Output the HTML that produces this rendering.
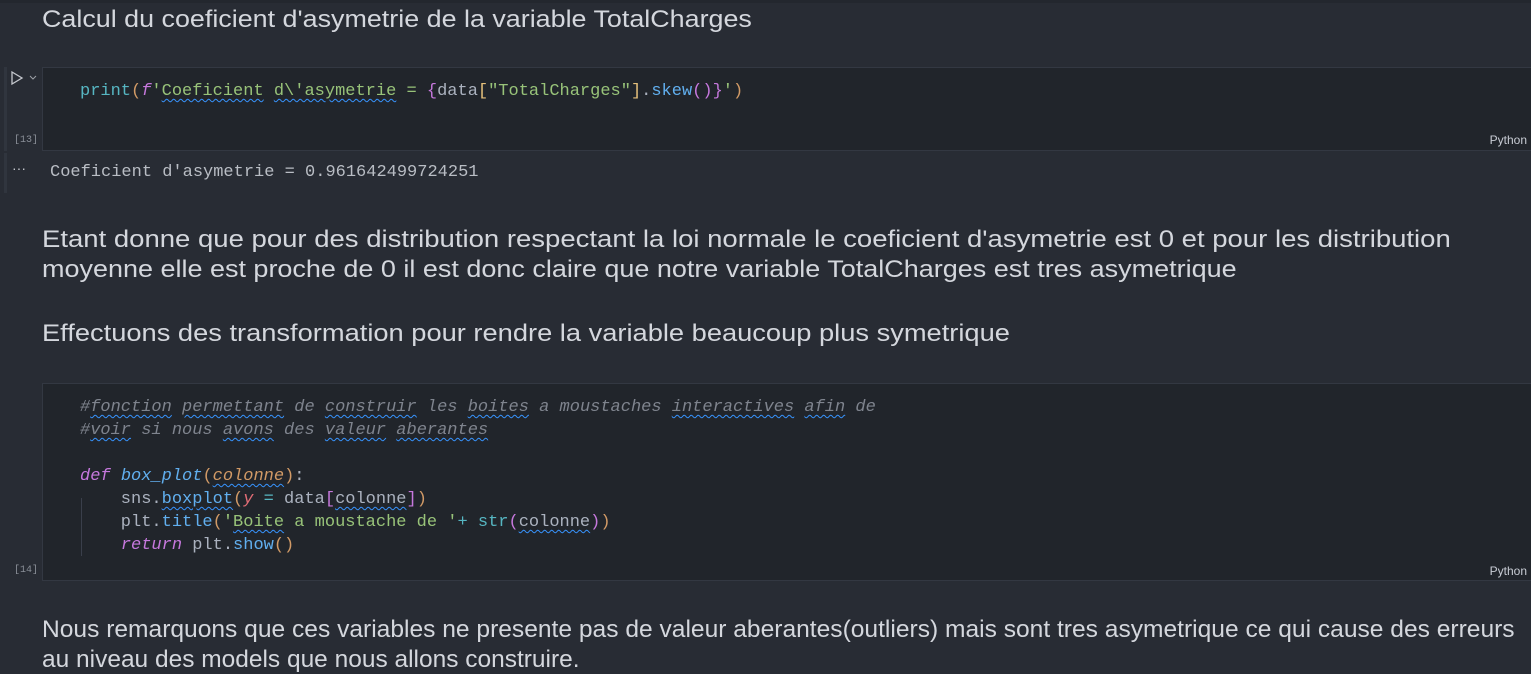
<!DOCTYPE html>
<html><head><meta charset="utf-8"><style>
body{margin:0;width:1531px;height:670px;background:#282c34;position:relative;overflow:hidden;font-family:"Liberation Sans",sans-serif;color:#d7dae0}
.md{position:absolute;left:42px;font-size:24px;white-space:nowrap;color:#d4d7dd;transform-origin:0 0}
.cell{position:absolute;left:42px;right:0;background:#21252b;border:1px solid #333842;border-right:none}
.code{position:absolute;left:80px;font-family:"Liberation Mono",monospace;font-size:17px;line-height:23px;white-space:pre;color:#abb2bf}
.num{position:absolute;left:14px;font-family:"Liberation Mono",monospace;font-size:10px;color:#8a8f98}
.py{position:absolute;right:4px;font-size:12px;color:#c8ccd4}
.bar{position:absolute;left:4px;width:3px;background:#30353e}
.f{color:#56b6c2}.s{color:#98c379}.k{color:#c678dd;font-style:italic}.o{color:#d19a66}.c{color:#7f848e;font-style:italic}.fn{color:#61afef;font-style:italic}.p{color:#e5c07b}.r{color:#e06c75;font-style:italic}.b{color:#61afef}
.w{text-decoration:underline wavy #3794ff;text-decoration-thickness:1px;text-underline-offset:3px}
</style></head><body>
<div style="position:absolute;left:0;top:0;width:1531px;height:3px;background:#23272e"></div>
<div class="md" style="top:6px;transform:scaleX(1.12)">Calcul du coeficient d'asymetrie de la variable TotalCharges</div>

<div class="bar" style="top:67px;height:84px"></div>
<svg style="position:absolute;left:10px;top:70px" width="28" height="16"><path d="M2 2 L12 8 L2 14 Z" fill="none" stroke="#c5c8ce" stroke-width="1.3"/><path d="M20 6 L23 9 L26 6" fill="none" stroke="#9ca0a6" stroke-width="1"/></svg>
<div class="cell" style="top:67px;height:82px"></div>
<div class="code" style="top:80px"><span class="f">print</span><span class="o">(</span><span class="k">f</span><span class="s">'<span class="w">Coeficient</span> <span class="w">d\'asymetrie</span> = </span><span class="k" style="font-style:normal">{</span>data<span class="p">[</span><span class="s">"TotalCharges"</span><span class="p">]</span>.<span class="b">skew</span><span class="k" style="font-style:normal">()</span><span class="k" style="font-style:normal">}</span><span class="s">'</span><span class="o">)</span></div>
<div class="num" style="top:135px">[13]</div>
<div class="py" style="top:133px">Python</div>
<div class="bar" style="top:153px;height:40px"></div>
<div style="position:absolute;left:12px;top:160px;color:#c5c8ce;font-size:14px">···</div>
<div class="code" style="left:50px;top:161px;color:#b9bdc4">Coeficient d'asymetrie = 0.961642499724251</div>

<div class="md" style="top:226px;transform:scaleX(1.146)">Etant donne que pour des distribution respectant la loi normale le coeficient d'asymetrie est 0 et pour les distribution</div>
<div class="md" style="top:256px;transform:scaleX(1.124)">moyenne elle est proche de 0 il est donc claire que notre variable TotalCharges est tres asymetrique</div>
<div class="md" style="top:320px;transform:scaleX(1.136)">Effectuons des transformation pour rendre la variable beaucoup plus symetrique</div>

<div class="cell" style="top:383px;height:196px"></div>
<div style="position:absolute;left:81px;top:498px;width:1px;height:58px;background:#3a3f4b"></div>
<div class="code" style="top:396px"><span class="c">#<span class="w">fonction</span> <span class="w">permettant</span> de <span class="w">construir</span> les <span class="w">boites</span> a moustaches <span class="w">interactives</span> <span class="w">afin</span> de</span>
<span class="c">#<span class="w">voir</span> si nous <span class="w">avons</span> des <span class="w">valeur</span> <span class="w">aberantes</span></span>

<span class="k">def</span> <span class="fn">box_plot</span><span class="o">(</span><span class="o" style="font-style:italic"><span class="w">colonne</span></span><span class="o">)</span>:
    sns.<span class="b w">boxplot</span><span class="o">(</span><span class="r">y</span> <span class="f">=</span> data<span class="k" style="font-style:normal">[</span><span class="w">colonne</span><span class="k" style="font-style:normal">]</span><span class="o">)</span>
    plt.<span class="b">title</span><span class="o">(</span><span class="s">'<span class="w">Boite</span> a moustache de '</span><span class="f">+</span> <span class="f">str</span><span class="k" style="font-style:normal">(</span><span class="w">colonne</span><span class="k" style="font-style:normal">)</span><span class="o">)</span>
    <span class="k">return</span> plt.<span class="b">show</span><span class="o">()</span></div>
<div class="num" style="top:565px">[14]</div>
<div class="py" style="top:564px">Python</div>

<div class="md" style="top:616px;transform:scaleX(1.024)">Nous remarquons que ces variables ne presente pas de valeur aberantes(outliers) mais sont tres asymetrique ce qui cause des erreurs</div>
<div class="md" style="top:646px;transform:scaleX(1.02)">au niveau des models que nous allons construire.</div>
</body></html>
